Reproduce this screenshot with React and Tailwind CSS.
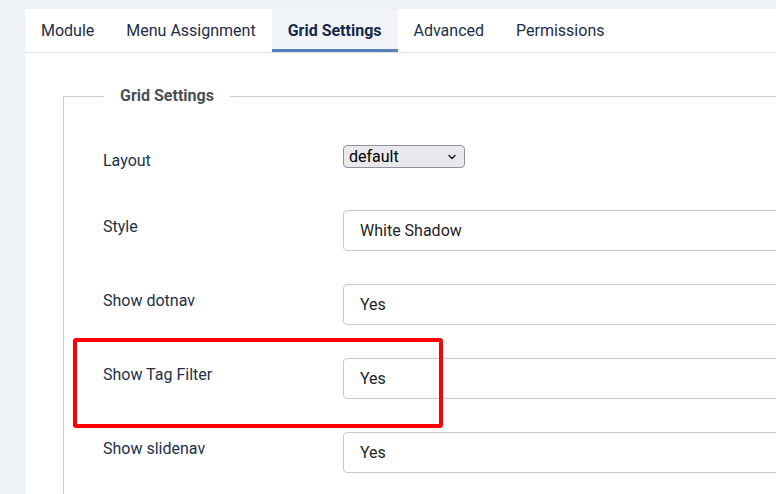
import React from "react";

const tabs = ["Module", "Menu Assignment", "Grid Settings", "Advanced", "Permissions"];

const rows = [
  { label: "Style", value: "White Shadow" },
  { label: "Show dotnav", value: "Yes" },
  { label: "Show Tag Filter", value: "Yes" },
  { label: "Show slidenav", value: "Yes" },
];

function Field({ label, value }) {
  return (
    <div className="flex items-start mb-[33px]">
      <div className="w-[240px] pt-[5px] leading-6 text-[#22304a]">{label}</div>
      <div className="flex-1 h-[41px] flex items-center pl-4 border border-[#c5cbd3] rounded bg-white text-[#1e2328]">
        {value}
      </div>
    </div>
  );
}

export default function App() {
  return (
    <div
      className="w-[776px] h-[494px] overflow-hidden bg-[#eef1f5] pt-[9px] pl-[25px] relative"
      style={{ fontFamily: "Roboto, 'Noto Sans', sans-serif" }}
    >
      <div className="w-[900px] h-[600px] bg-white">
        {/* tabs */}
        <div className="flex border-b border-[#dde2e7] h-[44px]">
          {tabs.map((t) => (
            <div
              key={t}
              className={
                t === "Grid Settings"
                  ? "h-[43px] px-4 flex items-center font-bold text-[#18294a] bg-[#f1f5fa] shadow-[inset_0_-3px_0_#5580b9]"
                  : "h-[43px] px-4 flex items-center text-[#1c2d4a]"
              }
            >
              {t}
            </div>
          ))}
        </div>

        <div className="pt-[31px] pl-[38px]">
          <fieldset className="border border-[#c8cdd3] w-[760px] h-[500px] m-0 p-0">
            <legend className="ml-10 px-4 font-bold leading-6 text-[#495057]">Grid Settings</legend>
            <div className="pl-[39px] pt-[36px]">
              <div className="flex items-start mb-[37px]">
                <div className="w-[240px] pt-[5px] leading-6 text-[#22304a]">Layout</div>
                <div className="mt-px w-[122px] h-[23px] flex items-center justify-between pl-[5px] pr-[7px] bg-[#e9e9ed] border border-[#8f8f9d] rounded text-black">
                  <span>default</span>
                  <svg width="10" height="10" viewBox="0 0 10 10" fill="none">
                    <path d="M2 3.5 L5 6.5 L8 3.5" stroke="#222" strokeWidth="1.5" strokeLinecap="round" strokeLinejoin="round" />
                  </svg>
                </div>
              </div>
              {rows.map((r) => (
                <Field key={r.label} label={r.label} value={r.value} />
              ))}
            </div>
          </fieldset>
        </div>
      </div>

      {/* highlight box */}
      <div className="absolute left-[73px] top-[338px] w-[370px] h-[90px] border-4 border-[#ff0000] rounded-[3px]"></div>
    </div>
  );
}
